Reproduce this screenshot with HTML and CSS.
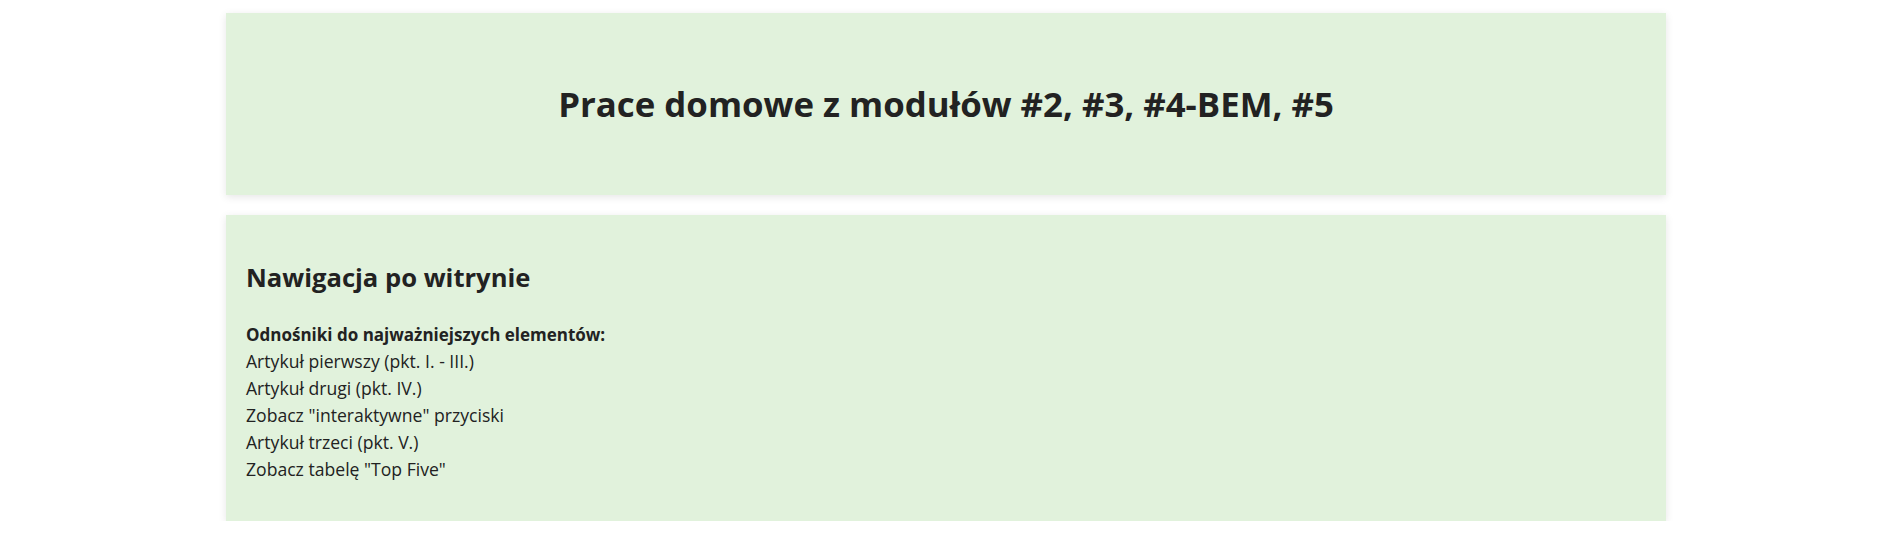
FILE: index.html
```html
<!DOCTYPE html>
<html lang="pl">
<head>
<meta charset="utf-8">
<title>Prace domowe</title>
<link rel="stylesheet" href="styles.css">
</head>
<body>
<main class="page">
  <header class="card hero">
    <h1 class="hero__title">Prace domowe z modułów #2, #3, #4-BEM, #5</h1>
  </header>
  <nav class="card site-nav">
    <h2 class="site-nav__title">Nawigacja po witrynie</h2>
    <p class="site-nav__lead">Odnośniki do najważniejszych elementów:</p>
    <ul class="site-nav__list">
      <li><a class="site-nav__link" href="#art1">Artykuł pierwszy (pkt. I. - III.)</a></li>
      <li><a class="site-nav__link" href="#art2">Artykuł drugi (pkt. IV.)</a></li>
      <li><a class="site-nav__link" href="#buttons">Zobacz "interaktywne" przyciski</a></li>
      <li><a class="site-nav__link" href="#art3">Artykuł trzeci (pkt. V.)</a></li>
      <li><a class="site-nav__link" href="#top5">Zobacz tabelę "Top Five"</a></li>
    </ul>
  </nav>
</main>
</body>
</html>
```
FILE: styles.css
```css
html, body {
  margin: 0;
  background: #ffffff;
}

body {
  padding-left: 5px;
  font-family: "Open Sans", "Noto Sans", sans-serif;
  color: #222222;
}

.page {
  width: 1440px;
  margin: 13px auto 0;
  display: flex;
  flex-direction: column;
  gap: 20px;
}

.card {
  background: #e1f2dc;
  box-shadow: 0 2px 8px rgba(0, 0, 0, 0.10);
}

.hero {
  height: 182px;
  display: flex;
  align-items: center;
  justify-content: center;
}

.hero__title {
  margin: 0;
  font-size: 34.8px;
  font-weight: 700;
  line-height: 1.2;
}

.site-nav {
  padding: 48px 20px 38px;
}

.site-nav__title {
  margin: 0 0 27px;
  font-size: 25.6px;
  font-weight: 700;
  line-height: 1.2;
}

.site-nav__lead {
  margin: 0;
  font-size: 17px;
  font-weight: 700;
  line-height: 27px;
}

.site-nav__list {
  margin: 0;
  padding: 0;
  list-style: none;
  font-size: 17.6px;
  line-height: 27px;
}

.site-nav__link {
  color: inherit;
  text-decoration: none;
}
```
